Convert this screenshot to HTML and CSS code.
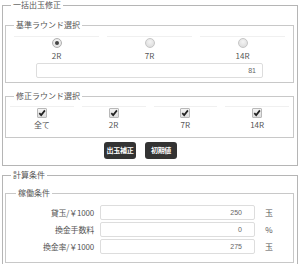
FILE: index.html
```html
<!DOCTYPE html>
<html lang="ja">
<head>
<meta charset="utf-8">
<link rel="stylesheet" href="styles.css">
</head>
<body>
<fieldset class="outer">
  <legend>一括出玉修正</legend>
  <fieldset class="inner base">
    <legend>基準ラウンド選択</legend>
    <div class="cols3">
      <div class="cell"><span class="radio on"></span><span class="lbl">2R</span></div>
      <div class="cell"><span class="radio"></span><span class="lbl">7R</span></div>
      <div class="cell"><span class="radio"></span><span class="lbl">14R</span></div>
    </div>
    <div class="numrow"><div class="inp wide">81</div></div>
  </fieldset>
  <fieldset class="inner fix">
    <legend>修正ラウンド選択</legend>
    <div class="cols4">
      <div class="cell"><span class="chk"><svg width="8" height="8" viewBox="0 0 8 8"><path d="M1.3 4.1 L3.2 6.1 L6.9 1.4" fill="none" stroke="#222" stroke-width="1.7"/></svg></span><span class="lbl">全て</span></div>
      <div class="cell"><span class="chk"><svg width="8" height="8" viewBox="0 0 8 8"><path d="M1.3 4.1 L3.2 6.1 L6.9 1.4" fill="none" stroke="#222" stroke-width="1.7"/></svg></span><span class="lbl">2R</span></div>
      <div class="cell"><span class="chk"><svg width="8" height="8" viewBox="0 0 8 8"><path d="M1.3 4.1 L3.2 6.1 L6.9 1.4" fill="none" stroke="#222" stroke-width="1.7"/></svg></span><span class="lbl">7R</span></div>
      <div class="cell"><span class="chk"><svg width="8" height="8" viewBox="0 0 8 8"><path d="M1.3 4.1 L3.2 6.1 L6.9 1.4" fill="none" stroke="#222" stroke-width="1.7"/></svg></span><span class="lbl">14R</span></div>
    </div>
  </fieldset>
  <div class="btns">
    <button class="btn">出玉補正</button>
    <button class="btn">初期値</button>
  </div>
</fieldset>
<fieldset class="outer second">
  <legend>計算条件</legend>
  <fieldset class="inner work">
    <legend>稼働条件</legend>
    <div class="frow"><span class="flbl">貸玉/￥1000</span><div class="inp">250</div><span class="unit">玉</span></div>
    <div class="frow"><span class="flbl">換金手数料</span><div class="inp">0</div><span class="unit">%</span></div>
    <div class="frow"><span class="flbl">換金率/￥1000</span><div class="inp">275</div><span class="unit">玉</span></div>
  </fieldset>
</fieldset>
</body>
</html>
```
FILE: styles.css
```css
html, body { margin: 0; padding: 0; background: #fff; }
body {
  font-family: "Noto Sans CJK JP", "Noto Sans", sans-serif;
  font-size: 8px;
  color: #555;
  width: 300px;
  height: 264px;
  overflow: hidden;
}
fieldset { margin: 0; min-width: 0; }
legend {
  font-size: 8px;
  line-height: 10px;
  padding: 0 2px;
  margin-left: 6px;
  color: #555;
}
.outer {
  margin: 0 2px;
  border: 1px solid #b5b5b5;
  padding: 10px 3px 6px 2px;
}
.second { margin-top: 4px; padding-top: 8px; }
.inner {
  border: 1px solid #c8c8c8;
  padding: 0 4px 4px 4px;
}
.inner legend { margin-left: 4px; }
.cols3 {
  display: grid;
  grid-template-columns: 1fr 1fr 1fr;
  padding-top: 6px;
}
.cols4 {
  display: grid;
  grid-template-columns: 1fr 1fr 1fr 1fr;
  margin: 0 -4px;
  padding-top: 5px;
}
.cell {
  display: flex;
  flex-direction: column;
  align-items: center;
  border-top: 1px solid #f0f0f0;
  margin: 0 4px;
  padding-top: 1px;
}
.lbl { font-size: 8px; line-height: 12px; margin-top: 2px; }
.fix .lbl { margin-top: 1px; }
.radio {
  width: 8px; height: 8px;
  border-radius: 50%;
  border: 1px solid #c6c6c6;
  background: radial-gradient(circle at 50% 35%, #f4f4f4, #d8d8d8);
  display: flex; align-items: center; justify-content: center;
}
.radio.on {
  border-color: #b0b0b0;
  background: radial-gradient(circle at 50% 35%, #f6f6f6, #dcdcdc);
}
.radio.on::after {
  content: "";
  width: 4px; height: 4px; border-radius: 50%;
  background: #444;
}
.chk {
  width: 8px; height: 8px;
  border: 1px solid #b8b8b8;
  border-radius: 1px;
  background: linear-gradient(#f4f4f4, #dedede);
  display: flex;
}
.chk svg { display: block; }
.numrow { display: flex; padding: 1px 26px 0 26px; }
.inp {
  flex: 1;
  height: 13px;
  border: 1px solid #ddd;
  border-radius: 2px;
  text-align: right;
  font-size: 7px;
  line-height: 13px;
  padding-right: 6px;
  color: #666;
  font-family: "Liberation Sans", Arial, sans-serif;
}
.fix { margin-top: 8px; padding-bottom: 6px; }
.btns {
  display: flex;
  justify-content: center;
  gap: 9px;
  padding-top: 4px;
  padding-right: 18px;
}
.btn {
  background: #333;
  color: #fff;
  border: none;
  border-radius: 3px;
  font-family: "Noto Sans CJK JP", sans-serif;
  font-size: 7px;
  font-weight: bold;
  height: 17px;
  min-width: 32px;
  padding: 0 2px;
  letter-spacing: -0.3px;
  line-height: 17px;
}
.work { padding: 6px 10px 7px 6px; }
.frow {
  display: flex;
  align-items: center;
  height: 17px;
}
.flbl { width: 88px; text-align: right; padding-right: 6px; box-sizing: border-box; letter-spacing: -0.2px; }
.frow .inp { height: 13px; line-height: 13px; padding-right: 12px; }
.unit { width: 28px; text-align: center; }
```
